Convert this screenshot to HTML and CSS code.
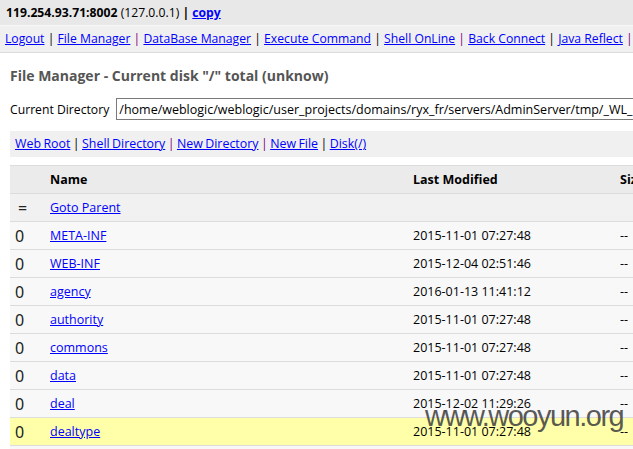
FILE: index.html
```html
<!DOCTYPE html>
<html>
<head>
<meta charset="utf-8">
<title>File Manager</title>
<link rel="stylesheet" href="styles.css">
</head>
<body>
<div class="topbar"><b>119.254.93.71:8002</b> (127.0.0.1) <b>| <a href="#">copy</a></b></div>
<div class="nav"><a href="#">Logout</a> | <a href="#">File Manager</a> <span class="sep">|</span> <a href="#">DataBase Manager</a> | <a href="#">Execute Command</a> | <a href="#">Shell OnLine</a> <span class="sep">|</span> <a href="#">Back Connect</a> | <a href="#">Java Reflect</a> <span class="sep">|</span></div>
<div class="main">
  <h2 class="title">File Manager - Current disk "/" total (unknow)</h2>
  <div class="dirrow">
    <span class="dirlabel">Current Directory</span>
    <input class="dirinput" type="text" value="/home/weblogic/weblogic/user_projects/domains/ryx_fr/servers/AdminServer/tmp/_WL_user/ryx/app/war/WEB-INF">
  </div>
  <div class="toolbar"><a href="#">Web Root</a> | <a href="#">Shell Directory</a> <span class="sep">|</span> <a href="#">New Directory</a> <span class="sep">|</span> <a href="#">New File</a> | <a href="#">Disk(/)</a></div>
  <table class="files">
    <thead>
      <tr class="head"><th class="c-icon"></th><th class="c-name">Name</th><th class="c-date">Last Modified</th><th class="c-size">Size</th></tr>
    </thead>
    <tbody>
      <tr class="parent"><td class="c-icon eq">=</td><td><a href="#">Goto Parent</a></td><td></td><td></td></tr>
      <tr><td class="c-icon">0</td><td><a href="#">META-INF</a></td><td>2015-11-01 07:27:48</td><td>--</td></tr>
      <tr><td class="c-icon">0</td><td><a href="#">WEB-INF</a></td><td>2015-12-04 02:51:46</td><td>--</td></tr>
      <tr><td class="c-icon">0</td><td><a href="#">agency</a></td><td>2016-01-13 11:41:12</td><td>--</td></tr>
      <tr><td class="c-icon">0</td><td><a href="#">authority</a></td><td>2015-11-01 07:27:48</td><td>--</td></tr>
      <tr><td class="c-icon">0</td><td><a href="#">commons</a></td><td>2015-11-01 07:27:48</td><td>--</td></tr>
      <tr><td class="c-icon">0</td><td><a href="#">data</a></td><td>2015-11-01 07:27:48</td><td>--</td></tr>
      <tr><td class="c-icon">0</td><td><a href="#">deal</a></td><td>2015-12-02 11:29:26</td><td>--</td></tr>
      <tr class="hl"><td class="c-icon">0</td><td><a href="#">dealtype</a></td><td>2015-11-01 07:27:48</td><td>--</td></tr>
      <tr><td class="c-icon">0</td><td><a href="#">dict</a></td><td>2015-11-01 07:27:48</td><td>--</td></tr>
    </tbody>
  </table>
</div>
<div class="watermark">www.wooyun.org</div>
</body>
</html>
```

FILE: styles.css
```css
html, body {
  margin: 0;
  padding: 0;
  overflow: hidden;
  background: #fff;
}
body {
  font-family: "Open Sans", "Noto Sans", sans-serif;
  font-size: 12.5px;
  color: #000;
  width: 633px;
  height: 449px;
  position: relative;
}
a { color: #0000ff; text-decoration: underline; }
.sep { color: #800080; }

.topbar {
  height: 25px;
  line-height: 25px;
  font-size: 12.2px;
  background: #e8e8e8;
  padding-left: 6px;
  border-bottom: 1px solid #f6f6f6;
  white-space: nowrap;
}
.nav {
  height: 26px;
  line-height: 26px;
  font-size: 12.2px;
  background: #f0f0f0;
  padding-left: 5px;
  border-bottom: 1px solid #dcdcdc;
  white-space: nowrap;
  overflow: hidden;
}
.main {
  padding: 0 0 0 10px;
}
.title {
  margin: 0;
  padding-top: 12px;
  height: 22px;
  line-height: 22px;
  font-size: 14px;
  font-weight: bold;
  color: #555;
  white-space: nowrap;
}
.dirrow {
  display: flex;
  align-items: center;
  margin-top: 10px;
  height: 24px;
  gap: 7px;
  font-size: 12.2px;
  white-space: nowrap;
}
.dirlabel { flex: none; }
.dirinput {
  flex: none;
  width: 600px;
  height: 22px;
  box-sizing: border-box;
  border: 1px solid #7a7a7a;
  padding: 0 2px;
  font-family: inherit;
  font-size: 12.5px;
  color: #000;
}
.toolbar {
  margin-top: 10px;
  height: 26px;
  line-height: 26px;
  font-size: 12.4px;
  word-spacing: -0.8px;
  background: #f0f0f0;
  padding-left: 5px;
  white-space: nowrap;
}
.files {
  margin-top: 8px;
  border-collapse: collapse;
  width: 700px;
  table-layout: fixed;
  white-space: nowrap;
}
.files th, .files td {
  height: 27px;
  padding: 0;
  text-align: left;
  border-top: 1px solid #dcdcdc;
  border-bottom: 1px solid #dcdcdc;
}
.files .head th {
  background: #ebebeb;
  font-weight: bold;
}
.c-icon { width: 40px; }
.c-name { width: 363px; }
.c-date { width: 207px; }
.c-size { width: 90px; }
.files td.c-icon {
  padding-left: 5px;
  font-size: 16px;
  font-family: "Noto Sans", "Open Sans", sans-serif;
  font-weight: normal;
  color: #222;
}
.files td.eq { padding-left: 8px; }
.files tbody tr { background: #f8f8f8; }
.files tbody tr.parent { background: #f1f1f1; }
.files tbody tr.hl { background: #ffffaa; }

.watermark {
  position: absolute;
  left: 425px;
  top: 400px;
  font-family: "Liberation Sans", Arial, sans-serif;
  font-size: 29px;
  letter-spacing: -1.5px;
  color: rgba(60, 60, 60, 0.85);
  white-space: nowrap;
}
```
